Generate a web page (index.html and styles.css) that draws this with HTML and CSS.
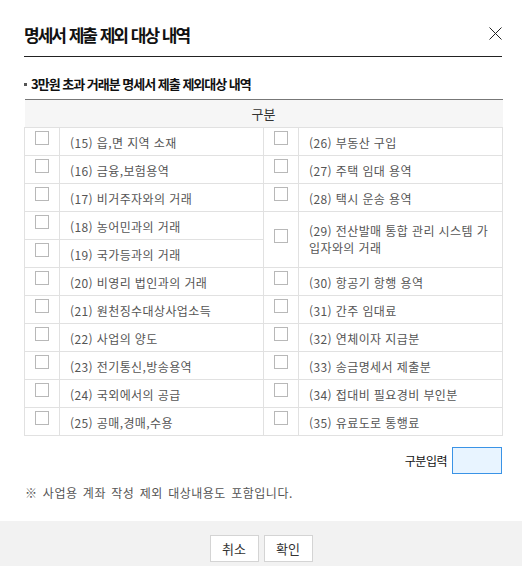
FILE: index.html
```html
<!DOCTYPE html>
<html lang="ko">
<head>
<meta charset="utf-8">
<title>명세서 제출 제외 대상 내역</title>
<link rel="stylesheet" href="styles.css">
</head>
<body>
<div class="dialog">
  <div class="content">
    <div class="header">
      <h1 class="title">명세서 제출 제외 대상 내역</h1>
      <button class="close" type="button" aria-label="닫기">
        <svg width="13" height="13" viewBox="0 0 13 13"><path d="M0.5 0.5 L12.5 12.5 M12.5 0.5 L0.5 12.5" stroke="#222" stroke-width="1" fill="none"/></svg>
      </button>
    </div>
    <h2 class="subtitle"><span class="bullet"></span>3만원 초과 거래분 명세서 제출 제외대상 내역</h2>
    <table class="grid">
      <colgroup><col class="c-chk"><col class="c-txt"><col class="c-chk"><col class="c-txt"></colgroup>
      <thead><tr><th colspan="4">구분</th></tr></thead>
      <tbody>
        <tr><td class="chk"><span class="box"></span></td><td class="txt">(15) 읍,면 지역 소재</td><td class="chk"><span class="box"></span></td><td class="txt">(26) 부동산 구입</td></tr>
        <tr><td class="chk"><span class="box"></span></td><td class="txt">(16) 금융,보험용역</td><td class="chk"><span class="box"></span></td><td class="txt">(27) 주택 임대 용역</td></tr>
        <tr><td class="chk"><span class="box"></span></td><td class="txt">(17) 비거주자와의 거래</td><td class="chk"><span class="box"></span></td><td class="txt">(28) 택시 운송 용역</td></tr>
        <tr><td class="chk"><span class="box"></span></td><td class="txt">(18) 농어민과의 거래</td><td class="chk mid" rowspan="2"><span class="box"></span></td><td class="txt two" rowspan="2">(29) 전산발매 통합 관리 시스템 가입자와의 거래</td></tr>
        <tr><td class="chk"><span class="box"></span></td><td class="txt">(19) 국가등과의 거래</td></tr>
        <tr><td class="chk"><span class="box"></span></td><td class="txt">(20) 비영리 법인과의 거래</td><td class="chk"><span class="box"></span></td><td class="txt">(30) 항공기 항행 용역</td></tr>
        <tr><td class="chk"><span class="box"></span></td><td class="txt">(21) 원천징수대상사업소득</td><td class="chk"><span class="box"></span></td><td class="txt">(31) 간주 임대료</td></tr>
        <tr><td class="chk"><span class="box"></span></td><td class="txt">(22) 사업의 양도</td><td class="chk"><span class="box"></span></td><td class="txt">(32) 연체이자 지급분</td></tr>
        <tr><td class="chk"><span class="box"></span></td><td class="txt">(23) 전기통신,방송용역</td><td class="chk"><span class="box"></span></td><td class="txt">(33) 송금명세서 제출분</td></tr>
        <tr><td class="chk"><span class="box"></span></td><td class="txt">(24) 국외에서의 공급</td><td class="chk"><span class="box"></span></td><td class="txt">(34) 접대비 필요경비 부인분</td></tr>
        <tr><td class="chk"><span class="box"></span></td><td class="txt">(25) 공매,경매,수용</td><td class="chk"><span class="box"></span></td><td class="txt">(35) 유료도로 통행료</td></tr>
      </tbody>
    </table>
    <div class="input-row">
      <label class="input-label" for="gubun">구분입력</label>
      <input class="input" id="gubun" type="text">
    </div>
    <p class="note">※ 사업용 계좌 작성 제외 대상내용도 포함입니다.</p>
  </div>
  <div class="footer">
    <button class="btn" type="button">취소</button>
    <button class="btn" type="button">확인</button>
  </div>
</div>
</body>
</html>
```
FILE: styles.css
```css
html, body {
  margin: 0;
  padding: 0;
  background: #fff;
}
body {
  font-family: "Noto Sans CJK KR", "Noto Sans", sans-serif;
  color: #333;
}
.dialog {
  width: 522px;
  height: 566px;
  display: flex;
  flex-direction: column;
}
.content {
  padding: 0 20px 0 24px;
  flex: 1;
}
.header {
  display: flex;
  justify-content: space-between;
  align-items: flex-start;
  padding-top: 22px;
  padding-bottom: 8px;
  border-bottom: 1px solid #222;
  height: 26px;
}
.title {
  margin: 0;
  font-size: 17px;
  line-height: 26px;
  font-weight: 700;
  letter-spacing: -2px;
  word-spacing: 1px;
  color: #111;
}
.close {
  margin: 5px 0 0 0;
  padding: 0;
  border: 0;
  background: none;
  width: 13px;
  height: 13px;
  display: block;
  line-height: 0;
}
.subtitle {
  margin: 18px 0 6px 0;
  font-size: 13px;
  line-height: 18px;
  font-weight: 700;
  letter-spacing: -1px;
  color: #111;
  display: flex;
  align-items: center;
}
.bullet {
  width: 3px;
  height: 3px;
  background: #555;
  margin: 1px 4px 0 0;
}
.grid {
  width: 478px;
  border-collapse: collapse;
  table-layout: fixed;
  font-size: 12px;
  color: #555;
  letter-spacing: 0.4px;
}
.c-chk { width: 35px; }
.c-txt { width: 204px; }
.grid th {
  height: 27px;
  padding: 0;
  background: #f6f6f6;
  border-top: 1px solid #777;
  border-bottom: 1px solid #e1e1e1;
  font-size: 13px;
  font-weight: 400;
  color: #333;
  text-align: center;
  letter-spacing: 0;
}
.grid td {
  height: 27px;
  padding: 0;
  border: 1px solid #e1e1e1;
}
.grid td.chk {
  text-align: center;
  vertical-align: top;
  padding-top: 3px;
  height: 24px;
}
.grid td.chk.mid {
  vertical-align: middle;
  padding-top: 0;
  padding-bottom: 5px;
}
.grid td.txt {
  padding: 2px 6px 0 10px;
  height: 25px;
  line-height: 17px;
  vertical-align: middle;
  white-space: nowrap;
}
.grid td.txt.two {
  white-space: normal;
  word-break: break-all;
  padding-bottom: 3px;
}
.box {
  display: inline-block;
  width: 12px;
  height: 12px;
  border: 1px solid #b8b8b8;
  background: #fff;
  vertical-align: top;
}
.input-row {
  display: flex;
  justify-content: flex-end;
  align-items: center;
  gap: 5px;
  margin-top: 11px;
  width: 478px;
}
.input-label {
  font-size: 12px;
  letter-spacing: -0.5px;
  color: #111;
}
.input {
  box-sizing: border-box;
  width: 50px;
  height: 27px;
  margin: 0;
  border: 1px solid #3a93e6;
  background: #e8f4ff;
  outline: none;
}
.note {
  margin: 10px 0 0 1px;
  font-size: 12px;
  line-height: 18px;
  color: #555;
  letter-spacing: 0.5px;
  word-spacing: 1.5px;
}
.footer {
  background: #f2f2f2;
  height: 31px;
  padding-top: 14px;
  display: flex;
  justify-content: center;
  align-items: flex-start;
  gap: 5px;
}
.btn {
  box-sizing: border-box;
  width: 49px;
  height: 27px;
  padding: 0;
  background: #fff;
  border: 1px solid #d4d4d4;
  font-family: "Noto Sans CJK KR", "Noto Sans", sans-serif;
  font-size: 13px;
  color: #333;
}
```
